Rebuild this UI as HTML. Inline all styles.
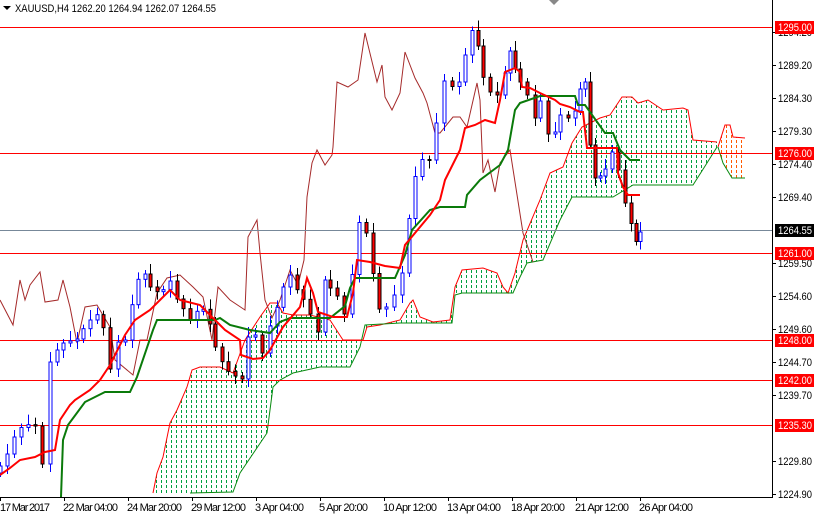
<!DOCTYPE html><html><head><meta charset="utf-8"><style>
html,body{margin:0;padding:0;background:#fff;width:814px;height:514px;overflow:hidden}
svg{display:block;font-family:"Liberation Sans",sans-serif}
</style></head><body>
<svg id="s" width="814" height="514" xmlns="http://www.w3.org/2000/svg">
<defs>
<pattern id="g" width="5" height="5" patternUnits="userSpaceOnUse"><rect x="1" y="0" width="1" height="3" fill="#00a040"/></pattern>
<pattern id="o" width="5" height="5" patternUnits="userSpaceOnUse"><rect x="1" y="0" width="1" height="3" fill="#ff5a00"/></pattern>
</defs>
<rect width="814" height="514" fill="#fff"/>
<polygon fill="url(#g)" points="153,493 157,473 163,457 170,423 177,410 187,387 192,370 200,367 220,367 233,373 245,340 260,317 270,303 277,303 283,313 293,315 310,315 330,320 343,340 363,340 367,327 380,325 400,320 410,303 413,300 420,317 433,322 450,320 455,287 462,270 483,268 497,273 503,287 508,293 515,273 523,240 540,200 550,173 563,167 572,143 582,127 600,118 610,115 622,97 632,97 638,103 648,100 663,110 683,108 688,110 693,140 717,142 717,147 707,163 693,185 633,185 613,197 572,197 560,220 543,260 527,263 520,277 513,293 462,293 455,295 452,323 400,323 365,325 360,347 350,367 320,367 293,373 280,380 273,387 267,433 240,473 233,492 190,493"/>
<polyline fill="none" stroke="#f00" stroke-width="1" points="153,493 157,473 163,457 170,423 177,410 187,387 192,370 200,367 220,367 233,373 245,340 260,317 270,303 277,303 283,313 293,315 310,315 330,320 343,340 363,340 367,327 380,325 400,320 410,303 413,300 420,317 433,322 450,320 455,287 462,270 483,268 497,273 503,287 508,293 515,273 523,240 540,200 550,173 563,167 572,143 582,127 600,118 610,115 622,97 632,97 638,103 648,100 663,110 683,108 688,110 693,140 717,142"/>
<polyline fill="none" stroke="#0a8a10" stroke-width="1" points="190,493 233,492 240,473 267,433 273,387 280,380 293,373 320,367 350,367 360,347 365,325 400,323 452,323 455,295 462,293 513,293 520,277 527,263 543,260 560,220 572,197 613,197 633,185 693,185 707,163 717,147"/>
<polygon fill="url(#o)" points="718,147 725,125 730,125 733,137 745,138 745,178 732,178 723,163"/>
<polyline fill="none" stroke="#f00" stroke-width="1" points="718,147 725,125 730,125 733,137 745,138"/>
<polyline fill="none" stroke="#0a8a10" stroke-width="1" points="718,147 723,163 732,178 745,178"/>
<polyline fill="none" stroke="#a52a2a" stroke-width="1" points="0,300 13,325 20,280 25,300 30,285 40,272 45,302 58,300 63,280 70,307 77,343 85,307 97,305 110,327 115,360 133,375 140,340 147,340 157,293 167,278 180,275 193,287 203,297 212,340 218,287 230,300 245,310 248,237 257,220 260,253 265,300 272,318 280,300 290,270 298,285 304,260 307,197 312,163 317,150 325,165 332,155 333,147 337,82 348,87 358,80 365,33 377,82 382,65 385,97 392,110 400,93 405,52 415,78 423,93 427,103 435,133 440,133 453,117 460,117 467,127 477,83 480,100 483,173 488,160 495,192 500,163 510,150 523,233 533,262"/>
<g stroke="#f00" stroke-width="1">
<line x1="0" y1="27.5" x2="772" y2="27.5"/><line x1="0" y1="153.5" x2="772" y2="153.5"/><line x1="0" y1="253.5" x2="772" y2="253.5"/><line x1="0" y1="340.5" x2="772" y2="340.5"/><line x1="0" y1="380.5" x2="772" y2="380.5"/><line x1="0" y1="425.5" x2="772" y2="425.5"/>
</g>
<line x1="0" y1="230.5" x2="772" y2="230.5" stroke="#778899"/>
<g id="c"></g>
<polyline fill="none" stroke="#0a7a0a" stroke-width="2" points="61,497 63,440 68,425 85,402 105,392 130,392 137,377 153,330 157,320 215,320 220,318 230,325 250,330 270,333 280,322 290,318 330,318 345,306 350,288 355,278 395,278 405,255 412,230 430,210 440,207 465,207 467,195 480,180 500,165 508,150 515,110 520,103 540,96 575,96 578,105 585,105 605,133 613,133 620,150 630,160 640,160"/>
<polyline fill="none" stroke="#f00" stroke-width="2" points="0,475 10,468 20,460 35,457 45,452 55,450 60,420 70,405 75,400 90,390 100,380 110,365 125,335 135,320 150,310 160,300 170,290 180,300 200,305 210,315 220,325 225,330 240,340 241,355 253,359 263,358 270,350 283,327 300,307 307,278 313,293 318,312 333,317 347,317 353,293 357,260 370,262 385,266 400,268 405,245 430,215 440,200 445,180 460,150 465,128 475,125 485,120 495,123 500,100 505,72 510,70 515,68 520,72 522,87 530,88 540,93 555,100 560,104 570,107 580,112 583,112 587,148 617,148 618,173 623,187 628,195 640,195"/>
<line x1="772.5" y1="0" x2="772.5" y2="497" stroke="#000"/>
<line x1="0" y1="497.5" x2="773" y2="497.5" stroke="#000"/>
<polygon points="549,0 559,0 554,5" fill="#888"/>
<polygon points="3,6 11,6 7,10" fill="#000"/>
<text x="15" y="12" font-size="11" fill="#000" textLength="201" lengthAdjust="spacingAndGlyphs">XAUUSD,H4  1262.20 1264.94 1262.07 1264.55</text>
<g font-size="11" fill="#000" id="ax"></g>
<g font-size="11" fill="#000" lengthAdjust="spacingAndGlyphs">
<text x="0" y="511" textLength="50">17 Mar 2017</text><text x="63" y="511" textLength="55">22 Mar 04:00</text><text x="127" y="511" textLength="55">24 Mar 20:00</text><text x="191" y="511" textLength="55">29 Mar 12:00</text><text x="255" y="511" textLength="49">3 Apr 04:00</text><text x="319" y="511" textLength="49">5 Apr 20:00</text><text x="383" y="511" textLength="54">10 Apr 12:00</text><text x="447" y="511" textLength="54">13 Apr 04:00</text><text x="511" y="511" textLength="54">18 Apr 20:00</text><text x="575" y="511" textLength="54">21 Apr 12:00</text><text x="639" y="511" textLength="54">26 Apr 04:00</text>
</g>
<g stroke="#000"><line x1="0.5" y1="497" x2="0.5" y2="501"/><line x1="64.5" y1="497" x2="64.5" y2="501"/><line x1="128.5" y1="497" x2="128.5" y2="501"/><line x1="192.5" y1="497" x2="192.5" y2="501"/><line x1="256.5" y1="497" x2="256.5" y2="501"/><line x1="320.5" y1="497" x2="320.5" y2="501"/><line x1="384.5" y1="497" x2="384.5" y2="501"/><line x1="448.5" y1="497" x2="448.5" y2="501"/><line x1="512.5" y1="497" x2="512.5" y2="501"/><line x1="576.5" y1="497" x2="576.5" y2="501"/><line x1="640.5" y1="497" x2="640.5" y2="501"/></g>
</svg>
<script>
var NS="http://www.w3.org/2000/svg";
function el(p,t,a,txt){var e=document.createElementNS(NS,t);for(var k in a)e.setAttribute(k,a[k]);if(txt)e.textContent=txt;p.appendChild(e);return e;}
var pts=[[0,470],[10,440],[17,430],[25,425],[35,430],[42,460],[50,360],[60,345],[70,345],[80,330],[90,320],[100,315],[110,365],[118,340],[125,340],[135,290],[145,270],[150,285],[160,295],[170,285],[180,300],[190,320],[200,310],[210,320],[215,345],[225,370],[235,380],[242,375],[248,335],[255,335],[262,355],[270,330],[280,290],[290,275],[300,300],[310,310],[318,330],[325,280],[330,290],[340,305],[348,315],[355,230],[362,215],[370,255],[375,300],[382,310],[390,300],[398,290],[405,260],[412,185],[418,160],[425,155],[432,165],[440,85],[448,85],[455,80],[462,80],[468,30],[475,35],[480,65],[490,90],[497,95],[505,75],[510,55],[515,65],[520,80],[527,95],[535,120],[540,105],[548,130],[555,130],[560,115],[568,120],[575,115],[580,85],[585,80],[590,145],[595,180],[600,180],[605,165],[612,150],[618,170],[622,190],[628,220],[633,235],[638,240],[640,230]];
var c=document.getElementById("c");
var ys=[];for(var i=0;i<pts.length-1;i++){var a=pts[i],b=pts[i+1];var n=Math.max(1,Math.round((b[0]-a[0])/3.3));for(var j=0;j<n;j++)ys.push([a[0]+(b[0]-a[0])*j/n,a[1]+(b[1]-a[1])*j/n]);}
ys.push(pts[pts.length-1]);
var prev=ys[0][1]+3;
for(var i=0;i<ys.length;i+=2){var x=Math.round(ys[i][0])+0.5,cl=ys[i][1]+((i*7)%5-2)*2,op=prev;var up=cl<op;var t=Math.min(op,cl),bt=Math.max(op,cl);if(bt-t<1)bt=t+1;var col=up?"#0000ff":"#000";
el(c,"line",{x1:x,x2:x,y1:t-4-(i%3)*3,y2:bt+4+(i%4)*2,stroke:col});
el(c,"rect",{x:x-1.5,y:t,width:3,height:bt-t,fill:up?"#fff":"#f00",stroke:col,"stroke-width":1});prev=cl;}
var ax=document.getElementById("ax");
[["1294.20",32],["1289.20",65],["1284.30",98],["1279.30",131],["1274.40",164],["1269.40",197],["1259.50",263],["1254.60",296],["1249.60",329],["1244.70",362],["1239.70",395],["1229.80",461],["1224.90",494]].forEach(function(l){el(ax,"line",{x1:772,x2:776,y1:l[1]+0.5,y2:l[1]+0.5,stroke:"#000"});el(ax,"text",{x:778,y:l[1]+4,textLength:34,lengthAdjust:"spacingAndGlyphs"},l[0]);});
[["1295.00",27,"#f00"],["1276.00",153,"#f00"],["1264.55",230,"#000"],["1261.00",253,"#f00"],["1248.00",340,"#f00"],["1242.00",380,"#f00"],["1235.30",425,"#f00"]].forEach(function(l){el(ax,"rect",{x:775,y:l[1]-6,width:39,height:13,fill:l[2]});el(ax,"text",{x:778,y:l[1]+4,fill:"#fff",textLength:34,lengthAdjust:"spacingAndGlyphs"},l[0]);});
</script>
</body></html>
